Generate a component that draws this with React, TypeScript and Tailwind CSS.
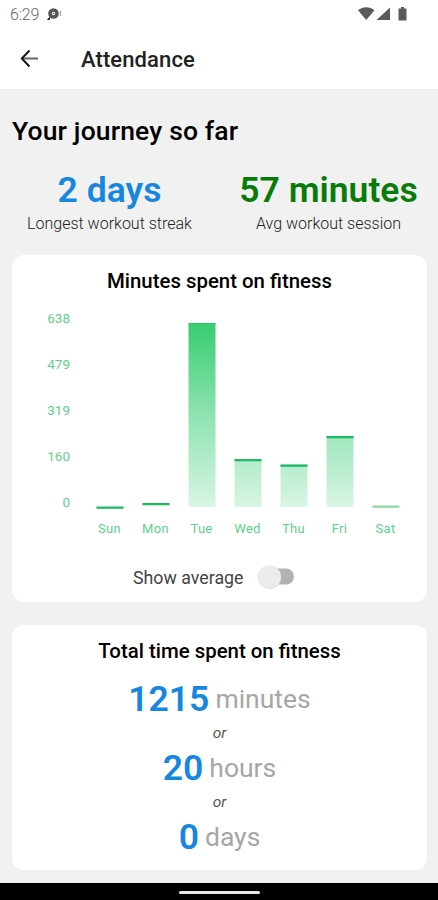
import { useState } from "react"

const bars = [
  { day: "Sun", top: 194.5, height: 0, cap: "#1fb860" },
  { day: "Mon", top: 191, height: 0, cap: "#1fb860" },
  { day: "Tue", top: 11, height: 184, cap: "#2fc76c" },
  { day: "Wed", top: 147, height: 48, cap: "#1fb866" },
  { day: "Thu", top: 152.5, height: 42.5, cap: "#1fb866" },
  { day: "Fri", top: 124, height: 71, cap: "#1fb866" },
  { day: "Sat", top: 193.5, height: 0, cap: "#8ddba4" },
]

const ticks = ["638", "479", "319", "160", "0"]

const totals = [
  { value: "1215", unit: "minutes" },
  { value: "20", unit: "hours" },
  { value: "0", unit: "days" },
]

function StatusBar() {
  return (
    <div className="flex h-[28px] items-center justify-between pl-[10px] pr-[31px] text-[#666]">
      <div className="flex items-center gap-[7px]">
        <span className="mt-[2px] text-[16px] font-light leading-[26px] tracking-[-0.2px] text-[#666]">6:29</span>
        <svg width="16" height="14" viewBox="0 0 16 14" fill="none">
          <path d="M1.500 12.500 3.500 10.500v2z" fill="#222" stroke="#222" />
          <circle cx="7.500" cy="6.500" r="3.500" stroke="#555" strokeWidth="3.600" />
          <circle cx="7.500" cy="6.500" r="0.800" fill="#555" />
          <path d="M14.500 4v5" stroke="#aaa" strokeWidth="1.500" />
        </svg>
      </div>
      <svg width="49" height="16" viewBox="0 0 49 16" fill="#5a5a5a">
        <path d="M0 4.200C4.800.200 11.700.200 16.500 4.200L8.200 14Z" />
        <path d="M32 1.500V14H18.500Z" />
        <path d="M43 1h3v1.500H48.500V14.500h-8V2.500H43z" />
      </svg>
    </div>
  )
}

function Header() {
  return (
    <header className="flex h-[62px] items-center border-b border-[#ebebeb] pl-[20px]">
      <svg width="19" height="20" viewBox="0 0 19 20" fill="none">
        <path d="M2 9.500h16" stroke="#666" strokeWidth="2" />
        <path d="M9.500 1.500 1.800 9.500l7.700 8" stroke="#111" strokeWidth="1.900" />
      </svg>
      <h1 className="ml-[42px] mt-[2px] text-[22px] font-medium tracking-[0.1px] text-[#222]">Attendance</h1>
    </header>
  )
}

function Stat({ value, label, className }: { value: string; label: string; className: string }) {
  return (
    <div className="flex w-[219px] flex-col items-center">
      <p className={`text-[35.5px] font-semibold leading-[42px] ${className}`}>{value}</p>
      <p className="mt-[3px] text-[16px] font-light leading-[20px] text-[#222]">{label}</p>
    </div>
  )
}

function MinutesChart() {
  return (
    <svg width="415" height="240" viewBox="0 -6 415 240" className="block">
      <defs>
        <linearGradient id="bar" gradientUnits="userSpaceOnUse" x1="0" y1="10" x2="0" y2="195">
          <stop offset="0" stopColor="#38cc70" />
          <stop offset="0.500" stopColor="#8ee2b0" />
          <stop offset="1" stopColor="#d9f5e4" />
        </linearGradient>
      </defs>
      {ticks.map((tick, i) => (
        <text key={tick} x="58" y={10.500 + i * 46} textAnchor="end" fontSize="13.500" fill="#5fd08a">
          {tick}
        </text>
      ))}
      {bars.map((bar, i) => (
        <g key={bar.day}>
          <rect x={84.500 + i * 46} y={bar.top} width="27" height={bar.height} fill="url(#bar)" />
          <rect x={84.500 + i * 46} y={bar.top} width="27" height={bar.height > 100 ? 1 : 2.300} fill={bar.cap} />
          <text x={97.500 + i * 46} y="221.400" textAnchor="middle" fontSize="13" letterSpacing="0.300" fill="#5fd08a">
            {bar.day}
          </text>
        </g>
      ))}
    </svg>
  )
}

export default function App() {
  const [average, setAverage] = useState(false)

  return (
    <div className="flex h-[900px] w-[438px] flex-col overflow-hidden bg-white font-[Roboto,sans-serif]">
      <StatusBar />
      <Header />
      <main className="flex-1 bg-[#f1f1f1] pt-[25px]">
        <h2 className="pl-[12px] text-[26.5px] font-medium leading-[32px] tracking-[0.15px] text-black">
          Your journey so far
        </h2>
        <div className="mt-[22px] flex">
          <Stat value="2 days" label="Longest workout streak" className="text-[#1687e0]" />
          <Stat value="57 minutes" label="Avg workout session" className="text-[#087c08]" />
        </div>

        <section className="ml-[12px] mr-[11px] mt-[21px] h-[347px] rounded-[12px] bg-white pt-[14px]">
          <h3 className="text-center text-[20.4px] font-medium leading-[25px] text-black">Minutes spent on fitness</h3>
          <div className="mt-[12px]">
            <MinutesChart />
          </div>
          <div className="mt-[17px] flex items-center pl-[121px]">
            <span className="mt-[2px] w-[110px] whitespace-nowrap text-[17.8px] leading-[26px] text-[#444]">
              Show average
            </span>
            <button
              role="switch"
              aria-checked={average}
              aria-label="Show average"
              onClick={() => setAverage(!average)}
              className="ml-[14px] flex h-[26px] w-[38px] items-center"
            >
              <svg width="38" height="26" viewBox="0 0 38 26">
                <rect x="6" y="4.500" width="31" height="16" rx="8" fill={average ? "#8ee2b0" : "#b2b2b2"} />
                <circle cx={average ? 26 : 12.500} cy="13.300" r="11.700" fill="#dedede" />
                <circle cx={average ? 26 : 12.500} cy="12.700" r="11.200" fill="#ececec" />
              </svg>
            </button>
          </div>
        </section>

        <section className="ml-[12px] mr-[11px] mt-[23px] h-[245px] rounded-[12px] bg-white pt-[14px] text-center">
          <h3 className="text-[20.4px] font-medium leading-[24px] text-black">Total time spent on fitness</h3>
          <div className="mt-[15px]">
            {totals.map((total, i) => (
              <div key={total.unit}>
                {i > 0 && <p className="h-[27px] text-[15.5px] italic leading-[27px] text-[#555]">or</p>}
                <p className="flex h-[42px] items-start justify-center gap-[6px]">
                  <span className="text-[35.5px] font-semibold leading-[42px] text-[#1687e0]">{total.value}</span>
                  <span className="text-[26.5px] leading-[42px] text-[#a6a6a6]">{total.unit}</span>
                </p>
              </div>
            ))}
          </div>
        </section>
      </main>
      <footer className="flex h-[17px] items-center justify-center bg-black">
        <div className="mt-[2px] h-[3px] w-[81px] rounded-full bg-[#e8e8e8]" />
      </footer>
    </div>
  )
}
